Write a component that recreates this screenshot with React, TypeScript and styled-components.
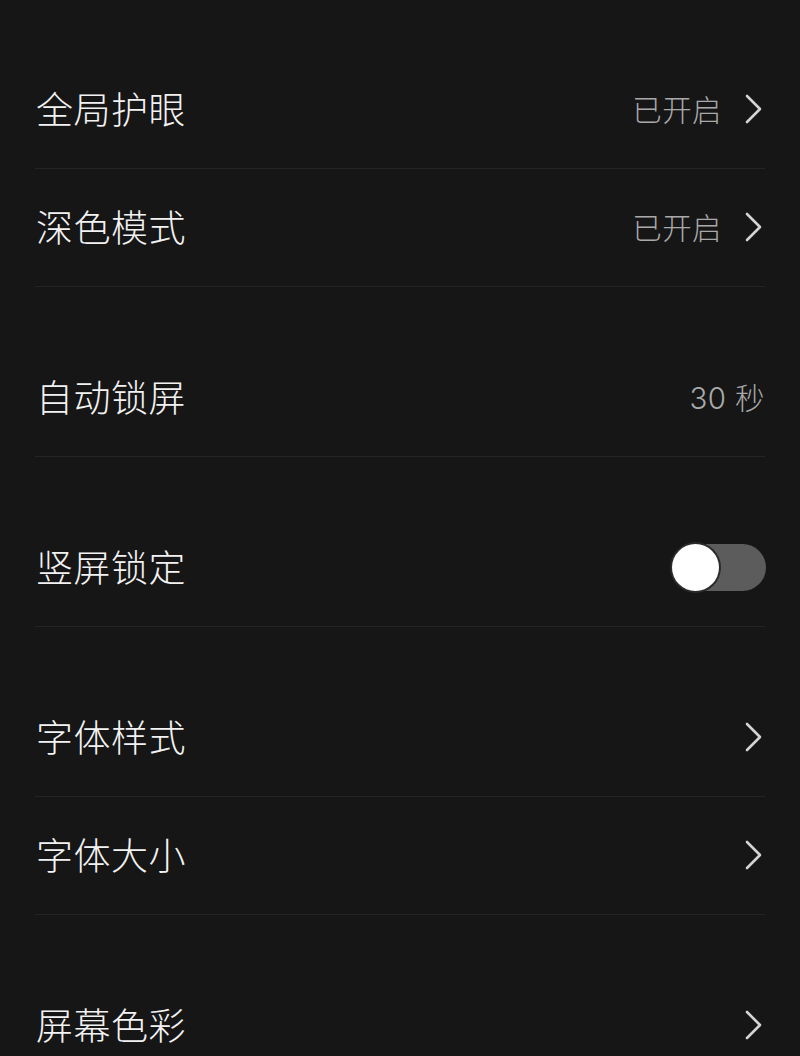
import React, { useState } from "react";
import styled, { createGlobalStyle } from "styled-components";

const GlobalStyle = createGlobalStyle`
	html, body {
		margin: 0;
		padding: 0;
		background: #161616;
	}
	body {
		font-family: "Noto Sans CJK SC", "Noto Sans", sans-serif;
		-webkit-font-smoothing: antialiased;
	}
`;

const Page = styled.div`
	min-height: 1056px;
	background: #161616;
	padding: 51px 35px 0;
	display: flex;
	flex-direction: column;
	gap: 52px;
	box-sizing: border-box;
	overflow: hidden;
`;

const Group = styled.div`
	display: flex;
	flex-direction: column;
`;

const Row = styled.div<{ $last?: boolean }>`
	height: 118px;
	flex-shrink: 0;
	box-sizing: border-box;
	display: flex;
	align-items: center;
	justify-content: space-between;
	border-bottom: ${(props) => (props.$last ? "none" : "1px solid #242424")};
	padding: 0 0 4px 1px;
`;

const Label = styled.span`
	font-size: 37px;
	font-weight: 300;
	color: #f2f2f2;
	letter-spacing: 0.5px;
`;

const Right = styled.div`
	display: flex;
	align-items: center;
	gap: 22px;
`;

const Value = styled.span`
	font-family: "Inter", "Noto Sans CJK SC", sans-serif;
	font-size: 29.5px;
	font-weight: 300;
	color: #a9a9a9;
	letter-spacing: 0.4px;
`;

const Track = styled.button<{ $on: boolean }>`
	width: 95px;
	height: 47px;
	border-radius: 24px;
	border: none;
	padding: 0;
	margin: 4px -1px 0 0;
	background: ${(props) => (props.$on ? "#4cd964" : "#5c5c5c")};
	position: relative;
	cursor: pointer;
`;

const Knob = styled.span<{ $on: boolean }>`
	position: absolute;
	top: 0;
	left: ${(props) => (props.$on ? "48px" : "1px")};
	width: 47px;
	height: 47px;
	border-radius: 50%;
	background: #fff;
	box-shadow: 0 0 0 2px #2a2a2a;
	transition: left 0.2s;
`;

const Chevron = () => (
	<svg width="20" height="30" viewBox="0 0 20 30" style={{ marginRight: "1px", marginTop: "2px" }}>
		<polyline
			points="3,2 16,15 3,28"
			fill="none"
			stroke="#d4d4d4"
			strokeWidth="2.6"
			strokeLinecap="round"
			strokeLinejoin="round"
		/>
	</svg>
);

type Item = { label: string; value?: string; arrow?: boolean; toggle?: boolean };

const groups: Item[][] = [
	[
		{ label: "全局护眼", value: "已开启", arrow: true },
		{ label: "深色模式", value: "已开启", arrow: true },
	],
	[{ label: "自动锁屏", value: "30 秒" }],
	[{ label: "竖屏锁定", toggle: true }],
	[
		{ label: "字体样式", arrow: true },
		{ label: "字体大小", arrow: true },
	],
	[{ label: "屏幕色彩", arrow: true }],
];

const App: React.FC = () => {
	const [locked, setLocked] = useState(false);

	return (
		<>
			<GlobalStyle />
			<Page>
				{groups.map((group, gi) => (
					<Group key={gi}>
						{group.map((item, i) => (
							<Row key={item.label} $last={gi === groups.length - 1 && i === group.length - 1}>
								<Label>{item.label}</Label>
								<Right>
									{item.value && <Value>{item.value}</Value>}
									{item.toggle && (
										<Track $on={locked} onClick={() => setLocked(!locked)}>
											<Knob $on={locked} />
										</Track>
									)}
									{item.arrow && <Chevron />}
								</Right>
							</Row>
						))}
					</Group>
				))}
			</Page>
		</>
	);
};

export default App;
